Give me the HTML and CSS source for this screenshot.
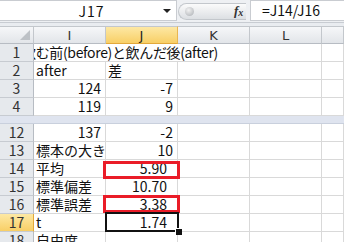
FILE: index.html
```html
<!DOCTYPE html>
<html lang="ja">

<head>
  <meta charset="utf-8">
  <title>Sheet</title>
  <link rel="stylesheet" href="styles.css">
</head>

<body>
  <div class="formula-bar">
    <div class="name-box">
      <span class="name">J17</span>
      <span class="arrow"></span>
    </div>
    <div class="splitter">
      <span class="knob"></span>
      <span class="fx"><i>f</i><sub>x</sub></span>
    </div>
    <div class="formula">=J14/J16</div>
  </div>

  <div class="sheet">
    <div class="row head">
      <div class="corner"><span class="tri"></span></div>
      <div class="col">I</div>
      <div class="col active">J</div>
      <div class="col">K</div>
      <div class="col">L</div>
      <div class="col"></div>
    </div>
    <div class="row">
      <div class="num">1</div>
      <div class="cell span3"><span class="clip">飲む前(before)と飲んだ後(after)</span></div>
      <div class="cell"></div>
      <div class="cell"></div>
    </div>
    <div class="row">
      <div class="num">2</div>
      <div class="cell">after</div>
      <div class="cell">差</div>
      <div class="cell"></div>
      <div class="cell"></div>
      <div class="cell"></div>
    </div>
    <div class="row">
      <div class="num">3</div>
      <div class="cell r">124</div>
      <div class="cell r">-7</div>
      <div class="cell"></div>
      <div class="cell"></div>
      <div class="cell"></div>
    </div>
    <div class="row">
      <div class="num">4</div>
      <div class="cell r">119</div>
      <div class="cell r">9</div>
      <div class="cell"></div>
      <div class="cell"></div>
      <div class="cell"></div>
    </div>
    <div class="split"></div>
    <div class="row">
      <div class="num">12</div>
      <div class="cell r">137</div>
      <div class="cell r">-2</div>
      <div class="cell"></div>
      <div class="cell"></div>
      <div class="cell"></div>
    </div>
    <div class="row">
      <div class="num">13</div>
      <div class="cell">標本の大きさ</div>
      <div class="cell r">10</div>
      <div class="cell"></div>
      <div class="cell"></div>
      <div class="cell"></div>
    </div>
    <div class="row">
      <div class="num">14</div>
      <div class="cell">平均</div>
      <div class="cell r dec">5.90</div>
      <div class="cell"></div>
      <div class="cell"></div>
      <div class="cell"></div>
    </div>
    <div class="row">
      <div class="num">15</div>
      <div class="cell">標準偏差</div>
      <div class="cell r dec">10.70</div>
      <div class="cell"></div>
      <div class="cell"></div>
      <div class="cell"></div>
    </div>
    <div class="row">
      <div class="num">16</div>
      <div class="cell">標準誤差</div>
      <div class="cell r dec">3.38</div>
      <div class="cell"></div>
      <div class="cell"></div>
      <div class="cell"></div>
    </div>
    <div class="row">
      <div class="num active">17</div>
      <div class="cell">t</div>
      <div class="cell r dec">1.74</div>
      <div class="cell"></div>
      <div class="cell"></div>
      <div class="cell"></div>
    </div>
    <div class="row">
      <div class="num">18</div>
      <div class="cell">自由度</div>
      <div class="cell"></div>
      <div class="cell"></div>
      <div class="cell"></div>
      <div class="cell"></div>
    </div>

    <div class="mark mark-mean"></div>
    <div class="mark mark-se"></div>
    <div class="selection"><span class="handle"></span></div>
  </div>
</body>

</html>
```

FILE: styles.css
```css
body,
html {
  margin: 0;
  padding: 0;
  height: 100%;
  overflow: hidden;
  background: #e9ecf0;
  font-family: "Noto Sans CJK JP", "Noto Sans", sans-serif;
  font-size: 14px;
  color: #111;
}

.formula-bar {
  display: flex;
  height: 22px;
  border-bottom: 1px solid #c8ccd2;
  background: #eef0f3;
}

.name-box {
  width: 177px;
  height: 21px;
  background: white;
  border: 1px solid #c9ccd1;
  border-left: none;
  box-sizing: border-box;
  display: flex;
  align-items: center;
}

.name {
  flex: 1;
  text-align: center;
  padding-left: 20px;
  letter-spacing: 1px;
}

.arrow {
  width: 0;
  height: 0;
  border-left: 4px solid transparent;
  border-right: 4px solid transparent;
  border-top: 4px solid #222;
  margin-right: 5px;
}

.splitter {
  width: 72px;
  display: flex;
  align-items: center;
  padding-left: 1px;
}

.knob {
  width: 68px;
  height: 17px;
  border-radius: 9px 0 0 9px;
  background: linear-gradient(#fbfbfb, #dcdfe3);
  border: 1px solid #c3c7cc;
  border-right: none;
  box-sizing: border-box;
  position: relative;
}

.knob::before {
  content: "";
  position: absolute;
  left: 6px;
  top: 3px;
  width: 9px;
  height: 9px;
  border-radius: 50%;
  background: radial-gradient(circle at 40% 35%, #f2f2f2, #a9adb2);
}

.fx {
  margin-left: -12px;
  font-family: "Liberation Serif", serif;
  font-weight: bold;
  font-size: 13px;
  color: #333;
  position: relative;
}

.fx sub {
  font-size: 10px;
  vertical-align: -1px;
  font-style: italic;
}

.formula {
  flex: 1;
  height: 21px;
  background: white;
  border: 1px solid #c9ccd1;
  border-right: none;
  box-sizing: border-box;
  padding-left: 11px;
  line-height: 19px;
}

.sheet {
  position: relative;
  margin-top: 3px;
  background: white;
}

.row {
  display: grid;
  grid-template-columns: 34px 72px 72px 72px 72px 1fr;
  height: 18px;
}

.row > div {
  border-right: 1px solid #d9d9d9;
  border-bottom: 1px solid #d9d9d9;
  box-sizing: border-box;
  line-height: 17px;
  white-space: nowrap;
  overflow: hidden;
}

.head > div {
  background: linear-gradient(#f6f7f9, #e2e5e9);
  border-top: 1px solid #c3c7cc;
  border-right-color: #c3c7cc;
  border-bottom-color: #b7bcc3;
  text-align: center;
  color: #333;
  font-family: "DejaVu Sans", sans-serif;
  font-size: 13px;
}

.head > .active {
  background: linear-gradient(#fde8a4, #f8cf66);
  border-bottom-color: #e2a83a;
  border-right-color: #e9b651;
  color: #222;
}

.corner {
  position: relative;
}

.tri {
  position: absolute;
  right: 3px;
  bottom: 3px;
  width: 0;
  height: 0;
  border-left: 10px solid transparent;
  border-bottom: 10px solid #bdc1c6;
}

.row > .num {
  background: #e6e9ed;
  border-right-color: #b7bcc3;
  border-bottom-color: #c7cbd1;
  text-align: center;
  color: #333;
}

.row > .num.active {
  background: linear-gradient(#fde8a4, #f8cf66);
  border-right-color: #e2a83a;
}

.cell {
  padding: 0 2px;
}

.cell.r {
  text-align: right;
  padding-right: 4px;
}

.cell.dec {
  padding-right: 10px;
}

.row > .span3 {
  grid-column: span 3;
  padding-left: 0;
}

.clip {
  display: inline-block;
  margin-left: -12px;
  letter-spacing: -0.35px;
}

.split {
  height: 7px;
  background: #dfe4ef;
  border-bottom: 1px solid #c9d0dd;
}

.mark {
  position: absolute;
  left: 103px;
  width: 77px;
  height: 18px;
  border: 3px solid #ea1c28;
  box-sizing: border-box;
}

.mark-mean {
  top: 135px;
}

.mark-se {
  top: 169px;
}

.selection {
  position: absolute;
  left: 105px;
  top: 186px;
  width: 74px;
  height: 20px;
  border: 2px solid #111;
  box-sizing: border-box;
}

.handle {
  position: absolute;
  right: -5px;
  bottom: -5px;
  width: 6px;
  height: 6px;
  background: #111;
  border-left: 1px solid white;
  border-top: 1px solid white;
}
```
